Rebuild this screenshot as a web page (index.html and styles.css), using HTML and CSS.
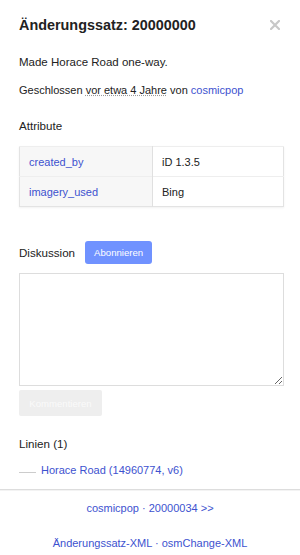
FILE: index.html
```html
<!DOCTYPE html>
<html lang="de">
<head>
  <meta charset="UTF-8">
  <meta name="viewport" content="width=device-width, initial-scale=1.0">
  <title>Änderungssatz: 20000000</title>
  <link rel="stylesheet" href="styles.css">
</head>
<body>
  <div class="sidebar">
    <div class="sidebar-header">
      <h2>Änderungssatz: 20000000</h2>
      <a class="close" href="#" aria-label="Schließen">
        <svg width="10" height="10" viewBox="0 0 10 10">
          <path d="M1 1 L9 9 M9 1 L1 9" stroke="#c8c8c8" stroke-width="2.2" stroke-linecap="square"/>
        </svg>
      </a>
    </div>

    <p class="comment">Made Horace Road one-way.</p>
    <p class="details">Geschlossen <abbr title="2014-01-01">vor etwa 4 Jahre</abbr> von <a href="#">cosmicpop</a></p>

    <h4>Attribute</h4>
    <table class="tags">
      <tr>
        <th><a href="#">created_by</a></th>
        <td>iD 1.3.5</td>
      </tr>
      <tr>
        <th><a href="#">imagery_used</a></th>
        <td>Bing</td>
      </tr>
    </table>

    <div class="discussion-head">
      <h4>Diskussion</h4>
      <button class="subscribe">Abonnieren</button>
    </div>
    <textarea class="comment-box"></textarea>
    <button class="submit" disabled>Kommentieren</button>

    <h4 class="list-title">Linien (1)</h4>
    <ul class="browse-list">
      <li><span class="way-line"></span><a href="#">Horace Road (14960774, v6)</a></li>
    </ul>
  </div>

  <div class="footer">
    <div class="nav"><a href="#">cosmicpop</a> · <a href="#">20000034 &gt;&gt;</a></div>
    <div class="downloads"><a href="#">Änderungssatz-XML</a> · <a href="#">osmChange-XML</a></div>
  </div>
</body>
</html>
```

FILE: styles.css
```css
body {
  margin: 0;
  padding: 0;
  font-family: "Liberation Sans", Arial, sans-serif;
  font-size: 11px;
  line-height: 18px;
  color: #222;
  background: #fff;
}

a {
  color: #3d52cf;
  text-decoration: none;
}

.sidebar {
  padding: 0 16px 0 19px;
}

.sidebar-header {
  display: flex;
  justify-content: space-between;
  align-items: center;
  padding-top: 15px;
}

.sidebar-header h2 {
  margin: 0;
  font-size: 14.4px;
  line-height: 20px;
  font-weight: bold;
}

.close {
  display: flex;
  margin-right: 4px;
}

.comment {
  margin: 18px 0 0;
  font-size: 11.5px;
}

.details {
  margin: 10px 0 0;
}

abbr {
  text-decoration: underline dotted #999;
}

h4 {
  margin: 18px 0 0;
  font-size: 11.6px;
  font-weight: normal;
}

.tags {
  width: 100%;
  margin-top: 11px;
  border-collapse: collapse;
  border: 1px solid #e3e3e3;
  box-shadow: 0 1px 2px rgba(0, 0, 0, 0.06);
}

.tags th,
.tags td {
  height: 29px;
  padding: 0 9px;
  text-align: left;
  font-weight: normal;
  border-top: 1px solid #eee;
}

.tags th {
  width: 114px;
  background: #f7f7f7;
  border-right: 1px solid #e0e0e0;
}

.discussion-head {
  display: flex;
  align-items: center;
  gap: 10px;
  margin-top: 34px;
}

.discussion-head h4 {
  margin: 0;
}

.subscribe {
  height: 23px;
  padding: 0 9px;
  border: none;
  border-radius: 3px;
  background: #7092ff;
  color: #fff;
  font-family: inherit;
  font-size: 9.6px;
}

.comment-box {
  display: block;
  width: 100%;
  height: 113px;
  margin-top: 9px;
  border: 1px solid #ddd;
  box-sizing: border-box;
  resize: vertical;
}

.submit {
  display: block;
  width: 83px;
  height: 26px;
  margin-top: 4px;
  border: none;
  border-radius: 2px;
  background: #eee;
  color: #fafafa;
  font-family: inherit;
  font-size: 9.6px;
}

.list-title {
  margin-top: 19px;
}

.browse-list {
  list-style: none;
  margin: 8px 0 0;
  padding: 0;
}

.browse-list li {
  display: flex;
  align-items: center;
}

.way-line {
  width: 17px;
  height: 0;
  margin-right: 5px;
  margin-top: 5px;
  border-top: 1px solid #ccc;
}

.footer {
  margin-top: 10px;
  border-top: 1px solid #ddd;
  box-shadow: 0 1px 0 #f3f3f3 inset;
  text-align: center;
  color: #3d52cf;
}

.nav {
  margin-top: 9px;
}

.downloads {
  margin-top: 17px;
}
```
